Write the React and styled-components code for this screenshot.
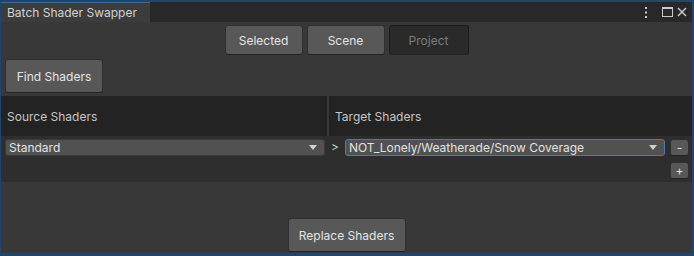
import React from 'react';
import styled, { createGlobalStyle } from 'styled-components';

const GlobalStyle = createGlobalStyle`
  html, body {
    margin: 0;
    padding: 0;
    background: #1d3550;
  }
  * {
    box-sizing: border-box;
  }
`;

const StyledWindow = styled.div`
  width: 694px;
  height: 256px;
  display: flex;
  flex-direction: column;
  background: #383838;
  border: 1px solid #23456a;
  border-top-width: 2px;
  border-right-width: 2px;
  border-bottom-width: 3px;
  font-family: Inter, "Noto Sans", sans-serif;
  font-size: 12px;
  color: #e0e0e0;
  overflow: hidden;
`;

const StyledTabBar = styled.div`
  height: 20px;
  display: flex;
  align-items: stretch;
  background: #282828;
`;

const StyledTab = styled.div`
  display: flex;
  align-items: center;
  width: 149px;
  padding: 0 6px;
  background: #3c3c3c;
  border-top: 1px solid #3d6a94;
  color: #d2d2d2;
  white-space: nowrap;
`;

const StyledTabTools = styled.div`
  margin-left: auto;
  display: flex;
  align-items: center;
  gap: 4px;
  padding-right: 5px;
`;

const StyledToolbar = styled.div`
  display: flex;
  justify-content: center;
  gap: 4px;
  margin-top: 3px;
`;

const StyledButton = styled.button`
  width: ${p => p.$width}px;
  height: ${p => p.$height}px;
  padding: 0;
  font: inherit;
  font-size: 12px;
  color: ${p => (p.$off ? '#7c7c7c' : '#e4e4e4')};
  background: ${p => (p.$off ? '#2a2a2a' : '#585858')};
  border: 1px solid ${p => (p.$off ? '#1c1c1c' : '#303030')};
  border-bottom-color: #232323;
  border-radius: 3px;
`;

const StyledFindRow = styled.div`
  margin-top: 4px;
  padding-left: 4px;
`;

const StyledHeader = styled.div`
  display: flex;
  gap: 2px;
  height: 40px;
  margin-top: 3px;
`;

const StyledHeaderCell = styled.div`
  width: ${p => p.$width}px;
  display: flex;
  align-items: center;
  padding-left: 6px;
  background: #232323;
  color: #c6c6c6;
  font-size: 12px;
`;

const StyledShaderRow = styled.div`
  display: flex;
  align-items: flex-start;
  height: 46px;
  padding: 3px 0 0 4px;
  background: #2e2e2e;
`;

const StyledDropdown = styled.div`
  width: 320px;
  height: 17px;
  display: flex;
  align-items: center;
  padding: 0 7px 0 3px;
  background: #515151;
  border: 1px solid ${p => (p.$focused ? '#4a7bb0' : '#3a3a3a')};
  border-radius: 3px;
  color: #e2e2e2;
  white-space: nowrap;
`;

const StyledDropdownLabel = styled.span`
  flex: 1;
`;

const StyledArrow = styled.span`
  width: 0;
  height: 0;
  border-left: 4px solid transparent;
  border-right: 4px solid transparent;
  border-top: 5px solid #d0d0d0;
`;

const StyledSeparator = styled.span`
  width: 20px;
  padding-left: 6px;
  line-height: 16px;
  color: #c8c8c8;
`;

const StyledSideButtons = styled.div`
  display: flex;
  flex-direction: column;
  gap: 6px;
  margin-left: 5px;
`;

const StyledSmallButton = styled.button`
  width: 19px;
  height: 17px;
  padding: 0;
  font: inherit;
  font-size: 12px;
  line-height: 1;
  color: #e0e0e0;
  background: #585858;
  border: 1px solid #303030;
  border-bottom-color: #232323;
  border-radius: 3px;
`;

const StyledFooter = styled.div`
  display: flex;
  justify-content: center;
  margin-top: 36px;
`;

const KebabIcon = () => (
  <svg width="4" height="11" viewBox="0 0 4 11">
    <rect x="1" y="0" width="2" height="2" fill="#c8c8c8" />
    <rect x="1" y="4.5" width="2" height="2" fill="#c8c8c8" />
    <rect x="1" y="9" width="2" height="2" fill="#c8c8c8" />
  </svg>
);

const MaximizeIcon = () => (
  <svg width="11" height="10" viewBox="0 0 11 10">
    <rect x="0.5" y="0.5" width="10" height="9" fill="none" stroke="#c8c8c8" />
    <rect x="0" y="0" width="11" height="2" fill="#c8c8c8" />
  </svg>
);

const CloseIcon = () => (
  <svg width="10" height="10" viewBox="0 0 10 10">
    <path d="M1 1 L9 9 M9 1 L1 9" stroke="#c8c8c8" strokeWidth="1.5" />
  </svg>
);

const App = () => (
  <>
    <GlobalStyle />
    <StyledWindow>
      <StyledTabBar>
        <StyledTab>Batch Shader Swapper</StyledTab>
        <StyledTabTools>
          <KebabIcon />
          <span style={{ width: 6 }} />
          <MaximizeIcon />
          <CloseIcon />
        </StyledTabTools>
      </StyledTabBar>

      <StyledToolbar>
        <StyledButton $width={78} $height={30}>Selected</StyledButton>
        <StyledButton $width={78} $height={30}>Scene</StyledButton>
        <StyledButton $width={80} $height={30} $off>Project</StyledButton>
      </StyledToolbar>

      <StyledFindRow>
        <StyledButton $width={98} $height={34}>Find Shaders</StyledButton>
      </StyledFindRow>

      <StyledHeader>
        <StyledHeaderCell $width={326}>Source Shaders</StyledHeaderCell>
        <StyledHeaderCell $width={363}>Target Shaders</StyledHeaderCell>
      </StyledHeader>

      <StyledShaderRow>
        <StyledDropdown>
          <StyledDropdownLabel>Standard</StyledDropdownLabel>
          <StyledArrow />
        </StyledDropdown>
        <StyledSeparator>&gt;</StyledSeparator>
        <StyledDropdown $focused>
          <StyledDropdownLabel>NOT_Lonely/Weatherade/Snow Coverage</StyledDropdownLabel>
          <StyledArrow />
        </StyledDropdown>
        <StyledSideButtons>
          <StyledSmallButton>-</StyledSmallButton>
          <StyledSmallButton>+</StyledSmallButton>
        </StyledSideButtons>
      </StyledShaderRow>

      <StyledFooter>
        <StyledButton $width={118} $height={34}>Replace Shaders</StyledButton>
      </StyledFooter>
    </StyledWindow>
  </>
);

export default App;
